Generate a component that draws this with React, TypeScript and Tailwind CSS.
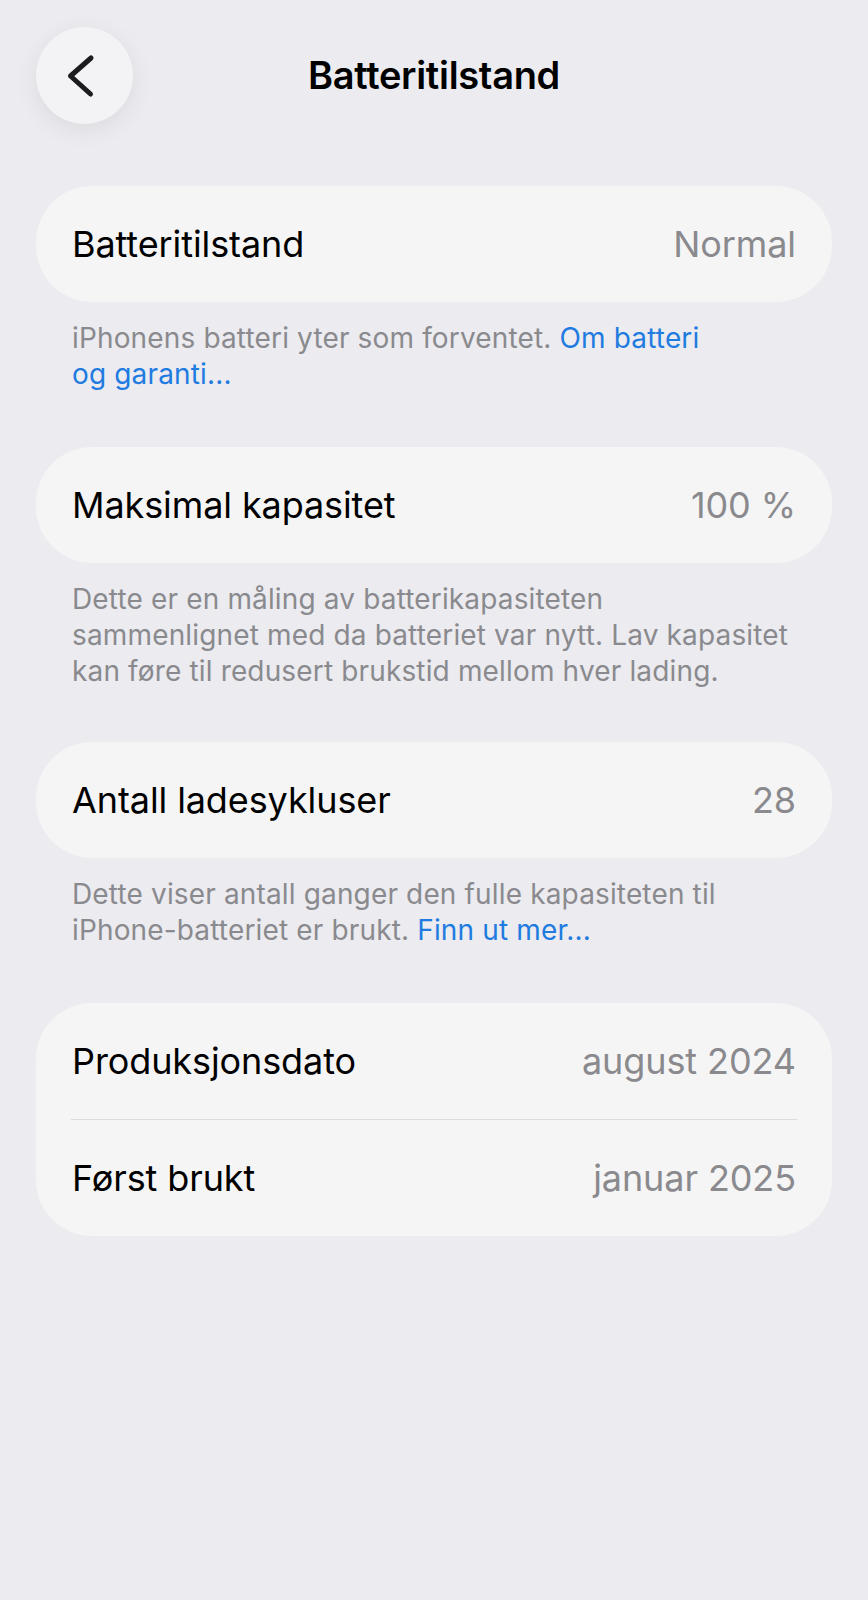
import React from "react";

const font = { fontFamily: "Inter, 'Noto Sans', 'Liberation Sans', sans-serif" };

function Row({ label, value }: { label: string; value: string }) {
  return (
    <div className="flex h-[116px] items-center justify-between px-[36px]">
      <span className="text-[36px] tracking-[-0.1px] text-black">{label}</span>
      <span className="text-[36px] tracking-[-0.1px] text-[#8A8A8E]">{value}</span>
    </div>
  );
}

function Card({ children }: { children: React.ReactNode }) {
  return <div className="rounded-[56px] bg-[#F5F5F5]">{children}</div>;
}

function Footer({ children }: { children: React.ReactNode }) {
  return (
    <p className="mt-[18px] whitespace-nowrap px-[36px] text-[28px] leading-[36px] tracking-[0.15px] text-[#8A8A8E]">
      {children}
    </p>
  );
}

export default function App() {
  return (
    <div className="min-h-[1600px] w-full bg-[#EBEBF0]" style={font}>
      <header className="grid grid-cols-[97px_1fr_97px] items-center px-[36px] pt-[27px]">
        <button className="flex h-[97px] w-[97px] items-center justify-center rounded-full bg-[#F3F3F6] shadow-[0_6px_24px_rgba(0,0,0,0.07)]">
          <svg width="97" height="97" viewBox="0 0 97 97" fill="none">
            <path
              d="M55 31 L34.5 49 L54.5 67"
              stroke="#1C1C1E"
              strokeWidth="5"
              strokeLinecap="round"
              strokeLinejoin="round"
            />
          </svg>
        </button>
        <h1 className="text-center text-[38px] font-semibold tracking-[-0.3px] text-black">
          Batteritilstand
        </h1>
        <div />
      </header>

      <main className="mt-[62px] px-[36px]">
        <Card>
          <Row label="Batteritilstand" value="Normal" />
        </Card>
        <Footer>
          iPhonens batteri yter som forventet. <span className="text-[#1F7BE0]">Om batteri</span>
          <br />
          <span className="text-[#1F7BE0]">og garanti...</span>
        </Footer>

        <div className="mt-[55px]">
          <Card>
            <Row label="Maksimal kapasitet" value="100 %" />
          </Card>
          <Footer>
            Dette er en måling av batterikapasiteten
            <br />
            sammenlignet med da batteriet var nytt. Lav kapasitet
            <br />
            kan føre til redusert brukstid mellom hver lading.
          </Footer>
        </div>

        <div className="mt-[53px]">
          <Card>
            <Row label="Antall ladesykluser" value="28" />
          </Card>
          <Footer>
            Dette viser antall ganger den fulle kapasiteten til
            <br />
            iPhone-batteriet er brukt. <span className="text-[#1F7BE0]">Finn ut mer...</span>
          </Footer>
        </div>

        <div className="mt-[55px]">
          <Card>
            <Row label="Produksjonsdato" value="august 2024" />
            <div className="mx-[35px] h-px bg-[#DCDCDE]" />
            <Row label="Først brukt" value="januar 2025" />
          </Card>
        </div>
      </main>
    </div>
  );
}
